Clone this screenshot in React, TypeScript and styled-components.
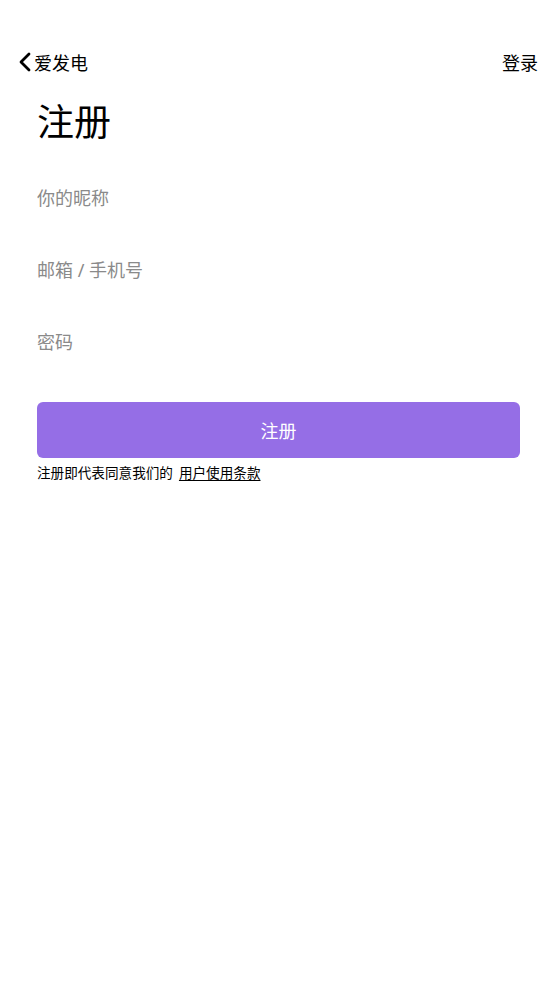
import styled, { createGlobalStyle } from "styled-components";

const GlobalStyle = createGlobalStyle`
  html, body {
    margin: 0;
    padding: 0;
    background: #fff;
  }
  body {
    font-family: "Noto Sans", "Noto Sans CJK SC", sans-serif;
    color: #000;
  }
  * {
    box-sizing: border-box;
  }
`;

const Page = styled.div`
  width: 100%;
  min-height: 991px;
  background: #fff;
`;

const NavBar = styled.div`
  display: flex;
  align-items: center;
  justify-content: space-between;
  height: 44px;
  margin-top: 40px;
  padding: 0 19px 0 16px;
`;

const BackLink = styled.a`
  display: flex;
  align-items: center;
  gap: 0;
  font-size: 18px;
  color: #000;
  text-decoration: none;
`;

const LoginLink = styled.a`
  font-size: 18px;
  color: #000;
  text-decoration: none;
`;

const Body = styled.div`
  padding: 0 37px;
`;

const Title = styled.h1`
  margin: 0;
  padding-top: 12px;
  font-size: 37px;
  font-weight: 400;
  line-height: 52px;
`;

const Form = styled.form`
  display: flex;
  flex-direction: column;
  margin-top: 14px;
`;

const Field = styled.input`
  display: block;
  width: 100%;
  height: 72px;
  border: none;
  outline: none;
  padding: 0;
  background: transparent;
  font-family: inherit;
  font-size: 18px;
  color: #000;
  caret-color: #555;

  &::placeholder {
    color: #8a8a8a;
  }
`;

const SubmitButton = styled.button`
  margin-top: 24px;
  width: 100%;
  height: 56px;
  border: none;
  border-radius: 6px;
  background: #956ee6;
  color: #fff;
  font-family: inherit;
  font-size: 18px;
  cursor: pointer;
`;

const Terms = styled.p`
  margin: 5px 0 0;
  font-size: 13.6px;
  line-height: 20px;
  color: #000;
`;

const TermsLink = styled.a`
  margin-left: 6px;
  color: #000;
  text-decoration: underline;
  text-underline-offset: 2px;
`;

const Chevron = () => (
  <svg width="18" height="22" viewBox="0 0 18 22" fill="none">
    <path
      d="M13 3 L5 11 L13 19"
      stroke="#000"
      strokeWidth="2.8"
      strokeLinecap="round"
      strokeLinejoin="round"
    />
  </svg>
);

export default function App() {
  return (
    <Page>
      <GlobalStyle />
      <NavBar>
        <BackLink href="#">
          <Chevron />
          爱发电
        </BackLink>
        <LoginLink href="#">登录</LoginLink>
      </NavBar>
      <Body>
        <Title>注册</Title>
        <Form onSubmit={(e) => e.preventDefault()}>
          <Field placeholder="你的昵称" autoFocus />
          <Field placeholder="邮箱 / 手机号" />
          <Field type="password" placeholder="密码" />
          <SubmitButton type="submit">注册</SubmitButton>
        </Form>
        <Terms>
          注册即代表同意我们的
          <TermsLink href="#">用户使用条款</TermsLink>
        </Terms>
      </Body>
    </Page>
  );
}
